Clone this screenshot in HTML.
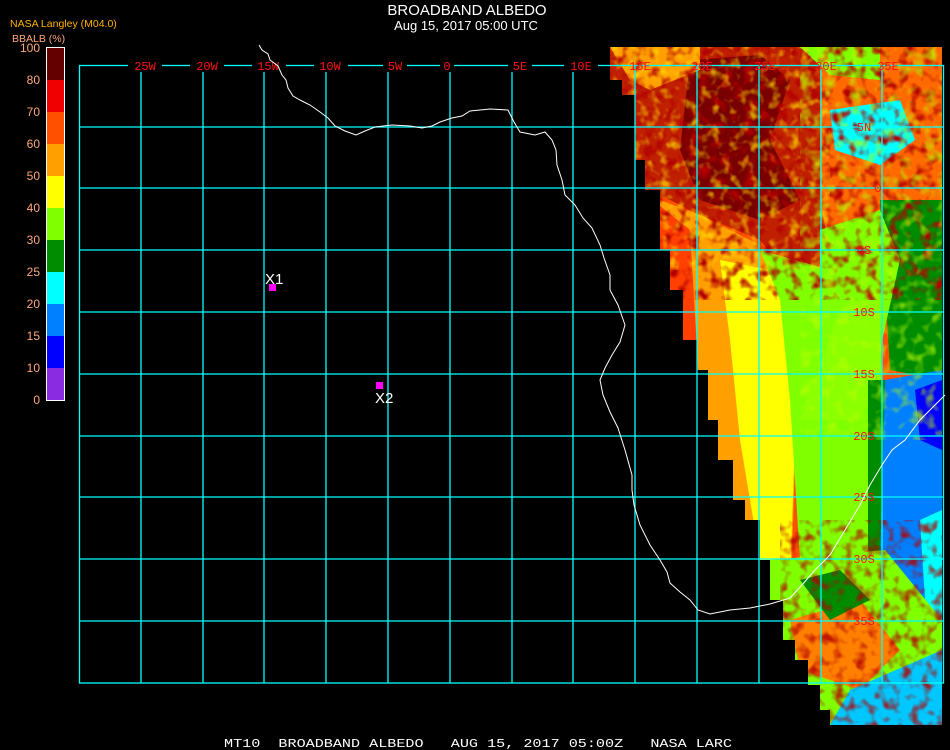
<!DOCTYPE html>
<html><head><meta charset="utf-8"><style>
html,body{margin:0;padding:0;background:#000;width:950px;height:750px;overflow:hidden}
svg{display:block}
</style></head><body>
<svg width="950" height="750" viewBox="0 0 950 750" xmlns="http://www.w3.org/2000/svg">
<defs>
<clipPath id="reg"><path d="M610 47H942V725H830V710H820V685H808V660H795V640H783V600H770V560H760V520H745V500H733V460H718V420H708V370H697V340H683V290H670V250H660V190H645V160H635V95H622V80H610Z"/></clipPath>
<filter id="tex" x="0" y="0" width="100%" height="100%">
<feTurbulence type="fractalNoise" baseFrequency="0.09" numOctaves="2" seed="3"/>
<feColorMatrix type="matrix" values="0 0 0 0 0.45  0 0 0 0 0  0 0 0 0 0  3 0 0 0 -1.4"/>
</filter>
<filter id="texy" x="0" y="0" width="100%" height="100%">
<feTurbulence type="fractalNoise" baseFrequency="0.1" numOctaves="2" seed="17"/>
<feColorMatrix type="matrix" values="0 0 0 0 1  0 0 0 0 0.75  0 0 0 0 0  3 0 0 0 -1.5"/>
</filter>
<filter id="tex2" x="0" y="0" width="100%" height="100%">
<feTurbulence type="fractalNoise" baseFrequency="0.08" numOctaves="2" seed="9"/>
<feColorMatrix type="matrix" values="0 0 0 0 0.5  0 0 0 0 1  0 0 0 0 0  3 0 0 0 -1.5"/>
</filter>
</defs>
<rect width="950" height="750" fill="#000"/>
<g clip-path="url(#reg)">
<rect x="600" y="40" width="350" height="700" fill="#ff5000"/>
<path d="M600 40H830V250L800 290L760 240L700 215L660 195L600 190Z" fill="#c02000"/>
<path d="M690 60L760 55L790 80L770 140L800 200L760 220L700 200L680 150Z" fill="#780000"/>
<path d="M610 47H700V70L650 90L630 80Z" fill="#ffa000"/>
<path d="M820 47H942V260L880 240L830 250L820 200Z" fill="#ff6a00"/>
<path d="M830 110L900 100L915 140L880 165L835 150Z" fill="#00ffff"/>
<path d="M800 47H880V80L830 75Z" fill="#80ff00"/>
<path d="M880 200H942V380L890 370Z" fill="#008c00"/>
<path d="M820 230L880 210L900 260L880 350L820 330Z" fill="#80ff00"/>
<path d="M660 200L700 215L760 245L800 300L790 620L760 620L700 500L660 300Z" fill="#ffa000"/>
<path d="M720 260L770 270L800 300L790 580L760 560L740 440L730 340Z" fill="#ffff00"/>
<path d="M640 190L690 230L700 400L720 520L700 520L660 300Z" fill="#ff4000"/>
<path d="M760 250L830 270L880 300L885 540L850 560L800 560L790 400L780 300Z" fill="#80ff00"/>
<path d="M800 420L860 420L880 380L880 300L840 310Z" fill="#8cff00"/>
<path d="M868 380H886V560H868Z" fill="#008c00"/>
<path d="M885 380L942 370V640H880V560Z" fill="#0080ff"/>
<path d="M915 390L942 380V450L920 440Z" fill="#0000ff"/>
<path d="M920 520L942 510V620L925 600Z" fill="#00ffff"/>
<path d="M770 560L885 550L942 620V725H770Z" fill="#80ff00"/>
<path d="M790 620L860 600L900 650L860 690L800 670Z" fill="#ff8000"/>
<path d="M850 690L942 650V725H830Z" fill="#00c8ff"/>
<path d="M800 580L840 570L870 600L830 620Z" fill="#008c00"/>
<rect x="600" y="40" width="350" height="260" filter="url(#tex)"/>
<rect x="600" y="40" width="230" height="230" filter="url(#texy)" opacity="0.7"/>
<rect x="780" y="520" width="170" height="220" filter="url(#tex)" opacity="0.8"/>
<rect x="800" y="40" width="150" height="400" filter="url(#tex2)" opacity="0.7"/>
</g>
<g stroke="#00ffff" stroke-width="1.3" fill="none">
<rect x="79.5" y="65.5" width="864" height="617.5"/>
<path d="M141 65V683M203 65V683M264 65V683M326 65V683M388 65V683M450 65V683M512 65V683M573 65V683M635 65V683M697 65V683M759 65V683M821 65V683M882 65V683"/>
<path d="M79 127H944M79 188H944M79 250H944M79 312H944M79 374H944M79 436H944M79 497H944M79 559H944M79 621H944"/>
</g>
<g font-family="Liberation Mono, monospace" font-size="12" fill="#ff1010" text-anchor="middle">
<rect x="128" y="58" width="34" height="14" fill="#000"/><text x="145" y="70">25W</text>
<rect x="190" y="58" width="34" height="14" fill="#000"/><text x="207" y="70">20W</text>
<rect x="252" y="58" width="34" height="14" fill="#000"/><text x="268" y="70">15W</text>
<rect x="314" y="58" width="34" height="14" fill="#000"/><text x="330" y="70">10W</text>
<rect x="383" y="58" width="24" height="14" fill="#000"/><text x="395" y="70">5W</text>
<rect x="440" y="58" width="14" height="14" fill="#000"/><text x="447" y="70">0</text>
<rect x="508" y="58" width="24" height="14" fill="#000"/><text x="520" y="70">5E</text>
<rect x="564" y="58" width="34" height="14" fill="#000"/><text x="581" y="70">10E</text>
<text x="640" y="70">15E</text><text x="702" y="70">20E</text><text x="765" y="70">25E</text><text x="826" y="70">30E</text><text x="888" y="70">35E</text>
<text x="864" y="131">5N</text><text x="878" y="192">0</text><text x="864" y="254">5S</text><text x="864" y="316">10S</text><text x="864" y="378">15S</text><text x="864" y="440">20S</text><text x="864" y="501">25S</text><text x="864" y="563">30S</text><text x="864" y="625">35S</text>
</g>
<path d="M259 45L262 50L268 54L270 60L278 66L282 75L286 80L288 88L293 96L300 100L310 105L320 112L328 118L335 126L345 131L356 135L365 131L375 127L392 125L410 126L422 128L432 126L440 122L452 118L462 116L470 111L490 109L508 110L514 122L520 132L535 135L545 132L552 140L556 150L557 165L562 180L565 195L575 205L583 218L592 228L600 245L604 258L610 275L610 290L618 305L625 325L620 342L612 355L605 368L600 380L603 395L610 412L618 428L625 450L632 475L632 490L634 505L640 525L650 545L660 560L667 572L670 583L680 592L690 600L698 610L710 614L730 610L750 608L770 604L790 598L802 585L815 570L830 555L845 530L860 505L870 485L882 465L892 450L905 440L920 420L935 405L945 395" fill="none" stroke="#fff" stroke-width="1"/>
<rect x="269" y="284" width="7" height="7" fill="#ff00ff"/>
<rect x="376" y="382" width="7" height="7" fill="#ff00ff"/>
<g font-family="Liberation Sans, sans-serif" font-size="15" fill="#fff">
<text x="265" y="284">X1</text><text x="375" y="403">X2</text>
</g>
<g font-family="Liberation Sans, sans-serif" fill="#fff" text-anchor="middle">
<text x="467" y="15" font-size="15">BROADBAND ALBEDO</text>
<text x="466" y="30" font-size="13">Aug 15, 2017 05:00 UTC</text>
</g>
<text x="224" y="747" font-family="Liberation Mono, monospace" font-size="12" fill="#fff" xml:space="preserve" style="white-space:pre" textLength="508" lengthAdjust="spacingAndGlyphs">MT10  BROADBAND ALBEDO   AUG 15, 2017 05:00Z   NASA LARC</text>
<text x="10" y="27" font-family="Liberation Sans, sans-serif" font-size="10.5" fill="#ffb000">NASA Langley (M04.0)</text>
<text x="12" y="42" font-family="Liberation Sans, sans-serif" font-size="10.5" fill="#ffa878">BBALB (%)</text>
<g>
<rect x="46" y="48" width="19" height="32" fill="#640000"/>
<rect x="46" y="80" width="19" height="32" fill="#f00000"/>
<rect x="46" y="112" width="19" height="32" fill="#ff5000"/>
<rect x="46" y="144" width="19" height="32" fill="#ffa000"/>
<rect x="46" y="176" width="19" height="32" fill="#ffff00"/>
<rect x="46" y="208" width="19" height="32" fill="#80ff00"/>
<rect x="46" y="240" width="19" height="32" fill="#008c00"/>
<rect x="46" y="272" width="19" height="32" fill="#00ffff"/>
<rect x="46" y="304" width="19" height="32" fill="#0080ff"/>
<rect x="46" y="336" width="19" height="32" fill="#0000ff"/>
<rect x="46" y="368" width="19" height="32" fill="#8a2be2"/>
<rect x="46.5" y="47.5" width="18" height="353" fill="none" stroke="#fff" stroke-width="1"/>
</g>
<g font-family="Liberation Sans, sans-serif" font-size="12" fill="#ffa878" text-anchor="end">
<text x="40" y="52">100</text><text x="40" y="84">80</text><text x="40" y="116">70</text><text x="40" y="148">60</text><text x="40" y="180">50</text><text x="40" y="212">40</text><text x="40" y="244">30</text><text x="40" y="276">25</text><text x="40" y="308">20</text><text x="40" y="340">15</text><text x="40" y="372">10</text><text x="40" y="404">0</text>
</g>
</svg>
</body></html>
